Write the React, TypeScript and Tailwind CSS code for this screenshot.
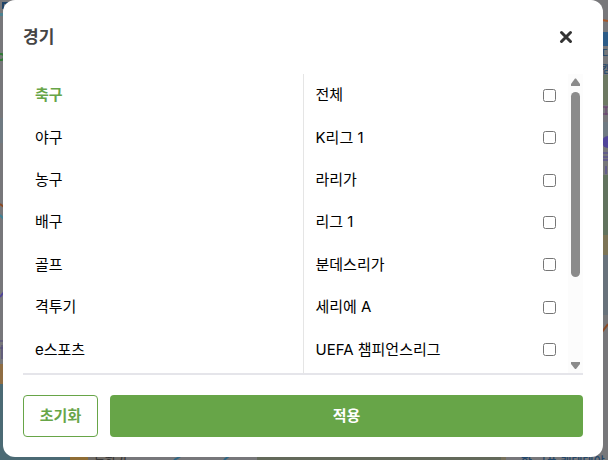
import { useState } from "react";

const sports = ["축구", "야구", "농구", "배구", "골프", "격투기", "e스포츠"];
const leagues = ["전체", "K리그 1", "라리가", "리그 1", "분데스리가", "세리에 A", "UEFA 챔피언스리그"];

function MapBackdrop() {
  return (
    <svg className="absolute inset-0 h-full w-full" viewBox="0 0 608 460" preserveAspectRatio="none" aria-hidden="true">
      <rect width="608" height="460" fill="#77777a" />
      {/* west edge */}
      <path d="M2 2h10v2H4v5H2z" fill="#1f4468" />
      <path d="M0 13h4v3H0z" fill="#4c8291" />
      <circle cx="1" cy="57" r="3" fill="none" stroke="#2f7a35" strokeWidth="2" />
      <rect y="118" width="4" height="25" fill="#6f7a82" />
      <path d="M0 204l4 3" stroke="#8a4a25" strokeWidth="2" />
      <path d="M0 215l4 4" stroke="#3f8296" strokeWidth="2" />
      <path d="M0 297l4-5" stroke="#50449a" strokeWidth="2" />
      <path d="M0 341h3M0 348h4M2 345v14" stroke="#51487d" />
      <rect y="364" width="4" height="20" fill="#8f6d43" />
      <rect y="384" width="70" height="76" fill="#4b6a74" />
      {/* south edge */}
      <rect x="70" y="450" width="18" height="10" fill="#8f6d35" />
      <rect x="88" y="450" width="37" height="10" fill="#6f6b66" />
      <text x="94" y="466" fontSize="12" fill="#2f2f31">등하기</text>
      <path d="M174 460l7-4M224 460l5-4" stroke="#2f6684" strokeWidth="2" />
      <rect x="257" y="450" width="244" height="10" fill="#63695a" />
      <rect x="501" y="450" width="5" height="10" fill="#77715c" />
      <text x="521" y="466" fontSize="12" fontWeight="500" fill="#23476b">한 그폰 캐테데야</text>
      {/* east edge */}
      <path d="M602 20l6 1" stroke="#a3562a" strokeWidth="2" />
      <rect x="603" y="32" width="5" height="14" fill="#2c5b87" />
      <text x="602" y="57" fontSize="10" fontWeight="500" fill="#23476b">다</text>
      <text x="602" y="73" fontSize="10" fontWeight="500" fill="#23476b">캠</text>
      <rect x="603" y="75" width="5" height="30" fill="#6d7963" />
      <path d="M603 107h5M603 114h5M606 107v8" stroke="#6b3c70" />
      <rect x="603" y="122" width="5" height="22" fill="#6f7a82" />
      <circle cx="608" cy="142" r="6" fill="#50449a" />
      <path d="M603 153h5M603 157h5M603 160h5M606 166v8" stroke="#50449a" />
      <rect x="603" y="175" width="5" height="60" fill="#62735e" />
      <rect x="603" y="235" width="5" height="20" fill="#7c7456" />
      <rect x="603" y="255" width="5" height="60" fill="#68727b" />
      <path d="M602 332l6-8" stroke="#8a4a25" strokeWidth="2" />
    </svg>
  );
}

export default function App() {
  const [sport, setSport] = useState("축구");
  return (
    <div className="relative h-screen overflow-hidden bg-[#77777a] pr-[5px] pb-[3px] pl-[3px] font-[Inter,'Noto_Sans_CJK_KR',sans-serif]">
      <MapBackdrop />
      <section role="dialog" aria-label="경기" className="relative flex h-full flex-col rounded-xl bg-white p-5">
        <header className="flex h-[34px] items-center justify-between">
          <h1 className="text-[17px] leading-6 font-bold text-[#444]">경기</h1>
          <button type="button" aria-label="닫기" className="mr-2.5 text-[#333]">
            <svg width="14" height="14" viewBox="0 0 14 14" stroke="currentColor" strokeWidth="3" strokeLinecap="round">
              <path d="M2.5 2.5l9 9M11.5 2.5l-9 9" />
            </svg>
          </button>
        </header>
        <div className="mt-5 flex min-h-0 flex-1 border-b-2 border-[#e5e5ea]">
          <ul className="grid flex-1 grid-rows-7 border-r border-[#e5e5e5] pb-0.5">
            {sports.map((name) => (
              <li key={name} className="flex">
                <button
                  type="button"
                  onClick={() => setSport(name)}
                  className={`flex-1 px-3 text-left text-[15px] leading-5 ${name === sport ? "font-bold text-[#67a548]" : "text-black"}`}
                >
                  {name}
                </button>
              </li>
            ))}
          </ul>
          <div className="flex flex-1">
            <ul className="grid flex-1 grid-rows-7 pb-0.5">
              {leagues.map((name) => (
                <li key={name} className="flex">
                  <label className="flex flex-1 items-center justify-between px-3 text-[15px] leading-5 text-black">
                    {name}
                    <input type="checkbox" className="size-[13px]" />
                  </label>
                </li>
              ))}
            </ul>
            <div className="flex w-[15px] flex-col items-center bg-[#fcfcfc] py-1" aria-hidden="true">
              <svg width="9" height="8" viewBox="0 0 9 8" fill="#8b8b8b"><path d="M4 0.5H5L9 6V8H0V6z" /></svg>
              <div className="mt-1.5 h-[185px] w-[9px] rounded-full bg-[#8b8b8b]" />
              <svg className="mt-auto" width="9" height="8" viewBox="0 0 9 8" fill="#8b8b8b"><path d="M0 1H9V3L5 8H4L0 3z" /></svg>
            </div>
          </div>
        </div>
        <footer className="mt-5 flex h-[42px] gap-3 text-[15px] font-bold">
          <button type="button" className="w-[75px] rounded border border-[#67a548] text-[#67a548]">초기화</button>
          <button type="button" className="flex-1 rounded bg-[#67a548] text-white">적용</button>
        </footer>
      </section>
    </div>
  );
}
